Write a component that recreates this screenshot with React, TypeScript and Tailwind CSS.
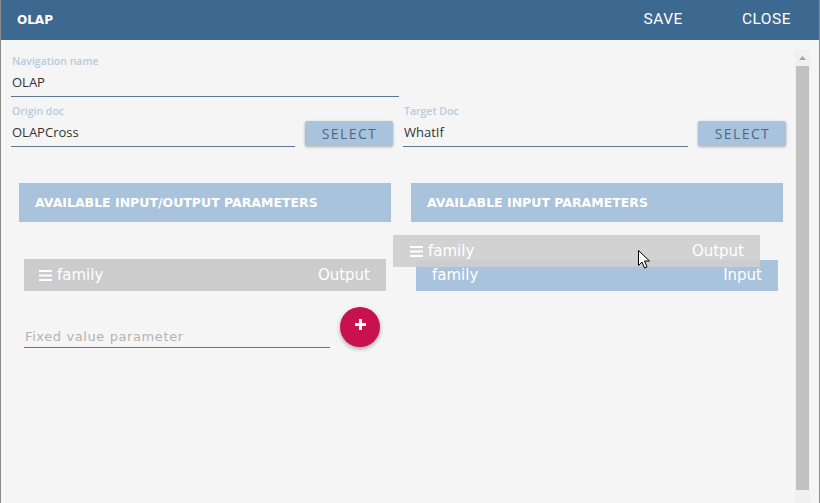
const sans = { fontFamily: '"Open Sans", "Noto Sans", sans-serif' };
const dv = { fontFamily: '"DejaVu Sans", Verdana, sans-serif' };

const Burger = () => (
  <svg width="13" height="11" viewBox="0 0 13 11" className="mr-[5px] shrink-0">
    <rect x="0" y="0" width="13" height="2" fill="white" />
    <rect x="0" y="4.5" width="13" height="2" fill="white" />
    <rect x="0" y="9" width="13" height="2" fill="white" />
  </svg>
);

const Field = ({ label, value, width }: { label: string; value: string; width: string }) => (
  <div className={`flex flex-col ${width}`}>
    <div className="h-[14px] pl-[1px] text-[10.5px] font-semibold leading-[14px] text-[#b5cbe2]" style={sans}>
      {label}
    </div>
    <div
      className="flex h-[29px] items-center border-b border-[#5a7896] pl-[1px] pt-[1px] text-[13px] text-[#333]"
      style={sans}
    >
      {value}
    </div>
  </div>
);

const SelectButton = () => (
  <button
    className="mb-[1px] ml-[10px] flex h-[25px] w-[88px] items-center justify-center rounded-[2px] bg-[#a9c3dc] pl-[1px] text-[14px] tracking-[1.4px] text-[#4b6886] shadow-[0_1px_3px_rgba(0,0,0,0.3)]"
    style={sans}
  >
    SELECT
  </button>
);

const PanelHeader = ({ title }: { title: string }) => (
  <div className="flex h-[39px] items-center bg-[#a9c3dc] pl-[16px] pt-[2px] text-[12.5px] font-bold text-white" style={dv}>
    {title}
  </div>
);

export default function App() {
  return (
    <div className="flex h-[503px] w-[820px] flex-col overflow-hidden border-l border-r border-[#8a8a8a] bg-[#f5f5f5]">
      {/* Title bar */}
      <div className="flex h-[40px] shrink-0 items-center bg-[#3d6890] pl-[16px] pr-[28px] text-white">
        <span className="text-[12px] font-bold" style={dv}>
          OLAP
        </span>
        <span className="ml-auto text-[15.5px] tracking-[0.5px]" style={{ fontFamily: 'Roboto, sans-serif' }}>
          SAVE
        </span>
        <span className="ml-[59px] text-[15.5px] tracking-[0.5px]" style={{ fontFamily: 'Roboto, sans-serif' }}>
          CLOSE
        </span>
      </div>

      <div className="relative flex flex-1">
        {/* Form */}
        <div className="w-[794px] pl-[10px] pt-[14px]">
          <Field label="Navigation name" value="OLAP" width="w-[388px]" />

          <div className="mt-[7px] flex gap-[10px]">
            <div className="flex w-[382px] items-end">
              <Field label="Origin doc" value="OLAPCross" width="w-[284px]" />
              <SelectButton />
            </div>
            <div className="flex w-[383px] items-end">
              <Field label="Target Doc" value="WhatIf" width="w-[285px]" />
              <SelectButton />
            </div>
          </div>

          {/* Parameters */}
          <div className="ml-[8px] mt-[36px] flex gap-[20px]">
            <div className="w-[372px]">
              <PanelHeader title="AVAILABLE INPUT/OUTPUT PARAMETERS" />
              <div
                className="mx-[5px] mt-[37px] flex h-[32px] items-center bg-[#cccccc] pl-[15px] pr-[16px] text-[15px] text-white"
                style={dv}
              >
                <Burger />
                <span>family</span>
                <span className="ml-auto">Output</span>
              </div>
              <div className="mx-[5px] mt-[16px] flex items-end">
                <div
                  className="flex h-[28px] w-[306px] items-center border-b border-[#5a7896] pl-[1px] pt-[6px] text-[13px] tracking-[0.6px] text-[#b3b3b3]"
                  style={dv}
                >
                  Fixed value parameter
                </div>
                <button className="mb-[1px] ml-[10px] flex h-[40px] w-[40px] items-center justify-center rounded-full bg-[#c8124f] shadow-[0_2px_4px_rgba(0,0,0,0.3)]">
                  <svg width="11" height="11" viewBox="0 0 11 11" className="-mt-[6px]">
                    <rect x="4" y="0" width="3" height="11" fill="white" />
                    <rect x="0" y="4" width="11" height="3" fill="white" />
                  </svg>
                </button>
              </div>
            </div>

            <div className="relative w-[372px]">
              <PanelHeader title="AVAILABLE INPUT PARAMETERS" />
              <div
                className="mx-[5px] mt-[38px] flex h-[31px] items-center bg-[#a9c3dc] pl-[16px] pr-[16px] text-[15px] text-white"
                style={dv}
              >
                <span>family</span>
                <span className="ml-auto">Input</span>
              </div>

              {/* dragged item */}
              <div
                className="absolute left-[-18px] top-[52px] flex h-[32px] w-[367px] items-center bg-[rgba(206,206,206,0.92)] pl-[17px] pr-[16px] text-[15px] text-white"
                style={dv}
              >
                <Burger />
                <span>family</span>
                <span className="ml-auto">Output</span>
              </div>

              {/* mouse cursor */}
              <svg width="13" height="20" viewBox="0 0 13 20" className="absolute left-[227px] top-[67px]">
                <path d="M0.5 0.5 L0.5 15.5 L4 12 L6.5 18 L9 17 L6.5 11 L11.5 11 Z" fill="white" stroke="black" strokeWidth="1" />
              </svg>
            </div>
          </div>
        </div>

        {/* Scrollbar */}
        <div className="mt-[10px] flex w-[15px] flex-col items-center bg-[#f0f0f0]">
          <div className="flex h-[16px] items-center justify-center">
            <svg width="7" height="4" viewBox="0 0 7 4">
              <path d="M0 4 L3.5 0 L7 4 Z" fill="#a3a3a3" />
            </svg>
          </div>
          <div className="h-[424px] w-[13px] bg-[#c1c1c1]" />
        </div>
        <div className="w-[9px]" />
      </div>
    </div>
  );
}
